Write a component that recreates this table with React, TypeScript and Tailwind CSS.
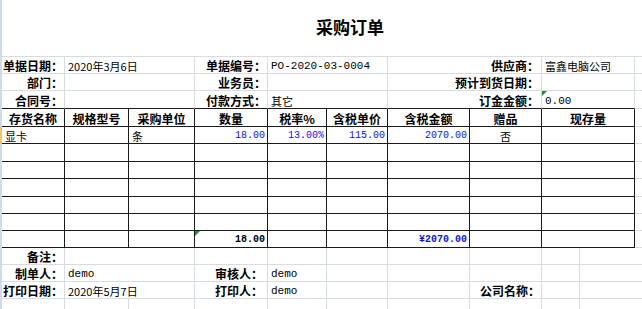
import React from "react";

const CJK = "font-['Noto_Sans_CJK_SC','Liberation_Sans',sans-serif]";
const MONO = "font-['Liberation_Mono','Noto_Sans_CJK_SC',monospace]";

const G = "border-r border-b border-[#d6dbe4]";
const GB = "border-r border-b border-r-[#d6dbe4] border-b-[#1a1a1a]";
const B = "border-r border-b border-[#1a1a1a]";
const GBOT = "border-b border-[#d6dbe4]";
const GR = "border-r border-[#d6dbe4]";

const LBL = "justify-end pr-[1px] font-bold text-[12px] text-black";
const VAL = "pl-[3px] text-[11px] text-black";
const NUM = `justify-end pr-[2px] ${MONO} text-[10px] text-[#1010e0]`;
const HDR = "justify-center font-bold text-[12px] text-black";

function C({
  w,
  cls = "",
  children,
  tri = false,
}: {
  w: string;
  cls?: string;
  children?: React.ReactNode;
  tri?: boolean;
}) {
  return (
    <div
      className={`relative flex items-end shrink-0 overflow-hidden whitespace-nowrap leading-[12px] pb-[1px] ${w} ${cls}`}
    >
      {tri && (
        <div className="absolute left-0 top-0 w-0 h-0 border-t-[5px] border-r-[5px] border-t-[#1e8c3a] border-r-transparent" />
      )}
      {children}
    </div>
  );
}

function TopRow({
  h,
  last,
  a,
  b,
  c,
  d,
  e,
  f,
  bMono = false,
  dMono = false,
  fMono = false,
  tri = false,
}: {
  h: string;
  last?: boolean;
  a: string;
  b: string;
  c: string;
  d: string;
  e: string;
  f: string;
  bMono?: boolean;
  dMono?: boolean;
  fMono?: boolean;
  tri?: boolean;
}) {
  const bc = last ? GB : G;
  return (
    <div className={`flex ${h}`}>
      <C w="w-[63px]" cls={`${bc} ${LBL}`}>{a}</C>
      <C w="w-[130px]" cls={`${bc} ${VAL} ${bMono ? MONO + " text-[10px]" : ""}`}>{b}</C>
      <C w="w-[73px]" cls={`${bc} ${LBL}`}>{c}</C>
      <C w="w-[120px]" cls={`${bc} ${VAL} ${dMono ? MONO + " text-[10px]" : ""}`}>{d}</C>
      <C w="w-[154px]" cls={`${bc} ${LBL} pr-[2px]`}>{e}</C>
      <C w="w-[93px]" cls={`${bc} ${VAL} ${fMono ? MONO + " text-[10px]" : ""}`} tri={tri}>
        {f}
      </C>
      <C w="w-[7px]" cls={GBOT} />
    </div>
  );
}

function TableRow({
  h,
  cells,
}: {
  h: string;
  cells?: React.ReactNode[];
}) {
  const v = cells ?? [];
  return (
    <div className={`flex ${h}`}>
      <C w="w-[63px]" cls={`${B} ${VAL} pl-[2px]`}>{v[0]}</C>
      <C w="w-[64px]" cls={`${B} ${VAL}`}>{v[1]}</C>
      <C w="w-[66px]" cls={`${B} ${VAL} pl-[1px]`}>{v[2]}</C>
      <C w="w-[73px]" cls={`${B} ${NUM}`}>{v[3]}</C>
      <C w="w-[59px]" cls={`${B} ${NUM}`}>{v[4]}</C>
      <C w="w-[61px]" cls={`${B} ${NUM}`}>{v[5]}</C>
      <C w="w-[82px]" cls={`${B} ${NUM}`}>{v[6]}</C>
      <C w="w-[72px]" cls={`${B} justify-center text-[11px] text-black`}>{v[7]}</C>
      <C w="w-[93px]" cls={`${B} ${VAL}`}>{v[8]}</C>
      <C w="w-[7px]" cls={GBOT} />
    </div>
  );
}

function FootRow({
  a,
  b,
  c,
  d,
  g,
  bMono = false,
}: {
  a: string;
  b: string;
  c: string;
  d: string;
  g: string;
  bMono?: boolean;
}) {
  return (
    <div className="flex h-[17px]">
      <C w="w-[63px]" cls={`${G} ${LBL}`}>{a}</C>
      <C w="w-[130px]" cls={`${G} ${VAL} ${bMono ? MONO + " text-[10px]" : ""}`}>{b}</C>
      <C w="w-[73px]" cls={`${G} ${LBL} pr-[4px]`}>{c}</C>
      <C w="w-[59px]" cls={`${G} ${VAL} ${MONO} text-[10px]`}>{d}</C>
      <C w="w-[61px]" cls={G} />
      <C w="w-[82px]" cls={G} />
      <C w="w-[72px]" cls={`${G} ${LBL}`}>{g}</C>
      <C w="w-[38px]" cls={G} />
      <C w="w-[62px]" cls={GBOT} />
    </div>
  );
}

export default function App() {
  return (
    <div className={`flex w-[642px] h-[309px] overflow-hidden bg-white ${CJK}`}>
      <div className="flex flex-col w-[2px] shrink-0">
        <div className="h-[127px] bg-[#cfdaea]" />
        <div className="h-[17px] bg-[#f3c46b]" />
        <div className="flex-1 bg-[#cfdaea]" />
      </div>
      <div className="flex flex-col w-[640px]">
        <div className={`flex h-[57px] items-center justify-center pl-[56px] pb-[2px] ${GBOT}`}>
          <span className="font-bold text-[17px] text-black tracking-[0px]">采购订单</span>
        </div>
        <TopRow
          h="h-[17px]"
          a="单据日期："
          b="2020年3月6日"
          c="单据编号："
          d="PO-2020-03-0004"
          dMono
          e="供应商："
          f="富鑫电脑公司"
        />
        <TopRow h="h-[17px]" a="部门：" b="" c="业务员：" d="" e="预计到货日期：" f="" />
        <TopRow
          h="h-[18px]"
          last
          a="合同号："
          b=""
          c="付款方式："
          d="其它"
          e="订金金额："
          f="0.00"
          fMono
          tri
        />
        {/* header */}
        <div className="flex h-[18px]">
          <C w="w-[63px]" cls={`${B} ${HDR}`}>存货名称</C>
          <C w="w-[64px]" cls={`${B} ${HDR}`}>规格型号</C>
          <C w="w-[66px]" cls={`${B} ${HDR}`}>采购单位</C>
          <C w="w-[73px]" cls={`${B} ${HDR}`}>数量</C>
          <C w="w-[59px]" cls={`${B} ${HDR}`}>税率%</C>
          <C w="w-[61px]" cls={`${B} ${HDR}`}>含税单价</C>
          <C w="w-[82px]" cls={`${B} ${HDR}`}>含税金额</C>
          <C w="w-[72px]" cls={`${B} ${HDR}`}>赠品</C>
          <C w="w-[93px]" cls={`${B} ${HDR}`}>现存量</C>
          <C w="w-[7px]" cls={GBOT} />
        </div>
        <TableRow
          h="h-[17px]"
          cells={["显卡", "", "条", "18.00", "13.00%", "115.00", "2070.00", "否", ""]}
        />
        <TableRow h="h-[18px]" />
        <TableRow h="h-[17px]" />
        <TableRow h="h-[18px]" />
        <TableRow h="h-[17px]" />
        <TableRow h="h-[17px]" />
        {/* totals */}
        <div className="flex h-[17px]">
          <C w="w-[63px]" cls={B} />
          <C w="w-[64px]" cls={B} />
          <C w="w-[66px]" cls={B} />
          <C w="w-[73px]" cls={`${B} justify-end pr-[2px] ${MONO} text-[10px] font-bold text-black`} tri>
            18.00
          </C>
          <C w="w-[59px]" cls={B} />
          <C w="w-[61px]" cls={B} />
          <C w="w-[82px]" cls={`${B} justify-end pr-[2px] ${MONO} text-[10px] font-bold text-[#1010e0]`}>
            ¥2070.00
          </C>
          <C w="w-[72px]" cls={B} />
          <C w="w-[93px]" cls={B} />
          <C w="w-[7px]" cls={GBOT} />
        </div>
        <FootRow a="备注：" b="" c="" d="" g="" />
        <FootRow a="制单人：" b="demo" bMono c="审核人：" d="demo" g="" />
        <FootRow a="打印日期：" b="2020年5月7日" c="打印人：" d="demo" g="公司名称：" />
        <div className="flex h-[10px]">
          <C w="w-[63px]" cls={GR} />
          <C w="w-[64px]" cls={GR} />
          <C w="w-[66px]" cls={GR} />
          <C w="w-[73px]" cls={GR} />
          <C w="w-[59px]" cls={GR} />
          <C w="w-[61px]" cls={GR} />
          <C w="w-[82px]" cls={GR} />
          <C w="w-[72px]" cls={GR} />
          <C w="w-[38px]" cls={GR} />
          <C w="w-[62px]" />
        </div>
      </div>
    </div>
  );
}
